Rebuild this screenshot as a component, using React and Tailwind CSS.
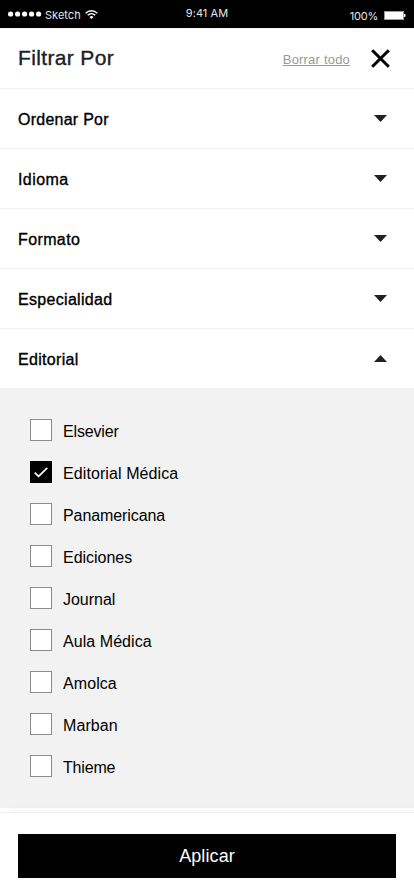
const sections = [
  { label: 'Ordenar Por', cls: 'tracking-[0.25px]' },
  { label: 'Idioma', cls: 'tracking-[0.42px]' },
  { label: 'Formato', cls: 'tracking-[0.38px]' },
  { label: 'Especialidad', cls: 'tracking-[0.31px]' },
  { label: 'Editorial', cls: 'tracking-[0.31px]', open: true },
];

const publishers = [
  { label: 'Elsevier', cls: 'tracking-[-0.17px]' },
  { label: 'Editorial Médica', checked: true, cls: 'tracking-[0.09px]' },
  { label: 'Panamericana', cls: 'tracking-[-0.09px]' },
  { label: 'Ediciones', cls: 'tracking-[-0.02px]' },
  { label: 'Journal', cls: 'tracking-[-0.02px]' },
  { label: 'Aula Médica', cls: 'tracking-[0.06px]' },
  { label: 'Amolca', cls: 'tracking-[0.08px]' },
  { label: 'Marban', cls: 'tracking-[0.08px]' },
  { label: 'Thieme', cls: 'tracking-[-0.18px]' },
];

function StatusBar() {
  return (
    <div className="grid h-7 grid-cols-3 bg-black px-2 font-['Inter',sans-serif] text-[11px] leading-[28px] text-[#e6e6e6]">
      <div className="flex items-center">
        <svg className="mb-[2px]" width="34" height="6" viewBox="0 0 34 6" fill="#fff">
          <circle cx="2.6" cy="3" r="2.6" />
          <circle cx="9.6" cy="3" r="2.6" />
          <circle cx="16.6" cy="3" r="2.6" />
          <circle cx="23.6" cy="3" r="2.6" />
          <circle cx="30.6" cy="3" r="2.6" />
        </svg>
        <span className="ml-[3px] w-[37px] tracking-[0.02px]">Sketch</span>
        <svg className="mb-[1px] ml-[3px]" width="13" height="9" viewBox="0 0 13 9" fill="none" stroke="#fff" strokeWidth="1.3">
          <path d="M0.7 3.2C4 -0.1 9 -0.1 12.3 3.2" />
          <path d="M2.7 5.3C4.9 3.2 8.1 3.2 10.3 5.3" />
          <path d="M4.5 6.9Q6.5 5.2 8.5 6.9L6.5 8.9Z" fill="#fff" stroke="none" />
        </svg>
      </div>
      <div className="-mt-px text-center tracking-[0.05px]">9:41 AM</div>
      <div className="flex items-center justify-end">
        <span className="pt-[2px] tracking-[-0.2px]">100%</span>
        <svg className="ml-[6px]" width="22" height="9" viewBox="0 0 22 9">
          <rect x="0.5" y="0.5" width="19" height="8" fill="#fff" stroke="#999" />
          <path d="M20 3h1.2q.8 1.5 0 3H20z" fill="#fff" />
        </svg>
      </div>
    </div>
  );
}

function Section({ label, cls, open }) {
  return (
    <div className="flex h-[60px] items-center justify-between border-t border-[#f2f2f2] pr-[27px] pl-[18px]">
      <span className={'pt-[3px] text-[16px] [-webkit-text-stroke:0.35px_#000] ' + cls}>{label}</span>
      <svg width="13" height="7" viewBox="0 0 13 7" fill="#202124">
        {open ? <path d="M0 7L6.5 0L13 7Z" /> : <path d="M0 0L6.5 7L13 0Z" />}
      </svg>
    </div>
  );
}

function Option({ label, cls, checked }) {
  return (
    <div className="flex h-[22px] items-center gap-[11px]">
      <div className={'flex h-[22px] w-[22px] items-center justify-center border ' + (checked ? 'border-black bg-black' : 'border-[#8c8c8c] bg-white')}>
        {checked && (
          <svg width="14" height="11" viewBox="0 0 14 11" fill="none" stroke="#fff" strokeWidth="1.7">
            <path d="M0.7 5.7L4.6 9.4L13.3 0.9" />
          </svg>
        )}
      </div>
      <span className={'pt-[3px] text-[16px] ' + cls}>{label}</span>
    </div>
  );
}

export default function App() {
  return (
    <div className="flex h-[896px] w-[414px] flex-col overflow-hidden bg-white font-['Liberation_Sans',Arial,sans-serif] text-black">
      <StatusBar />
      <header className="flex h-[60px] items-center border-t border-[#f2f2f2] pr-[24px] pl-[18px]">
        <h1 className="pb-[2px] text-[21px] tracking-[0.35px] text-[#202124] [-webkit-text-stroke:0.35px_#202124]">Filtrar Por</h1>
        <span className="mt-[3px] mr-[21px] ml-auto text-[13px] tracking-[0.2px] text-[#999] underline">Borrar todo</span>
        <svg width="19" height="19" viewBox="0 0 19 19" fill="none" stroke="#000" strokeWidth="3">
          <path d="M1.2 1.2L17.8 17.8M17.8 1.2L1.2 17.8" />
        </svg>
      </header>
      {sections.map((s) => (
        <Section key={s.label} {...s} />
      ))}
      <div className="flex h-[420px] flex-col gap-5 bg-[#f2f2f2] pt-[31px] pl-[30px]">
        {publishers.map((p) => (
          <Option key={p.label} {...p} />
        ))}
      </div>
      <footer className="mt-1 flex-1 border-t border-[#f0f0f0] bg-white px-[18px] pt-[21px] shadow-[10px_0_10px_rgba(0,0,0,0.06)]">
        <button className="block h-[44px] w-full bg-black text-center text-[18px] leading-[44px] tracking-[0.1px] text-white">Aplicar</button>
      </footer>
    </div>
  );
}
